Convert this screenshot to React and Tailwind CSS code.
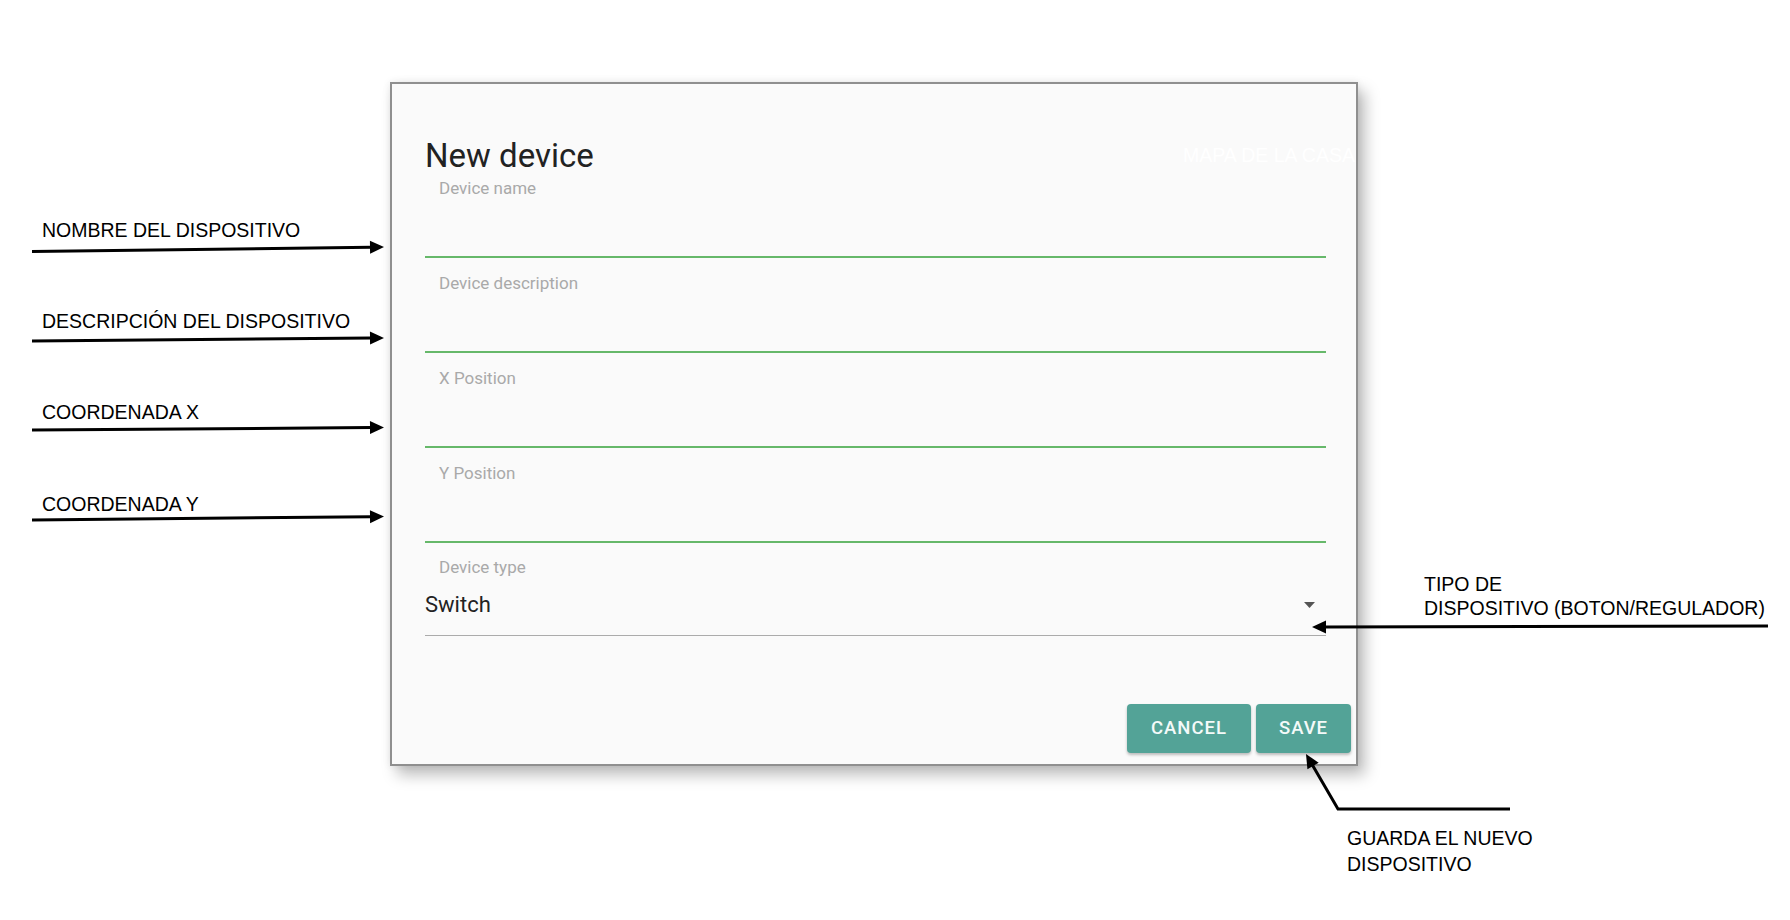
import React from 'react';

const fields = ['Device name', 'Device description', 'X Position', 'Y Position'];

// annotation arrows, page coordinates
const arrows = [
  { pts: [[32, 251.5], [384, 247]] },
  { pts: [[32, 341], [384, 338]] },
  { pts: [[32, 430], [384, 427.5]] },
  { pts: [[32, 520], [384, 516.5]] },
  { pts: [[1768, 626], [1312, 627]] },
  { pts: [[1510, 809], [1338, 809], [1306, 754]] },
];

const Arrow = ({ pts }) => {
  const [tx, ty] = pts[pts.length - 1];
  const [px, py] = pts[pts.length - 2];
  const len = Math.hypot(tx - px, ty - py);
  const ux = (tx - px) / len;
  const uy = (ty - py) / len;
  const bx = tx - ux * 14;
  const by = ty - uy * 14;
  const nx = -uy * 6.5;
  const ny = ux * 6.5;
  const line = [...pts.slice(0, -1), [bx + ux, by + uy]].map((p) => p.join(',')).join(' ');
  return (
    <g>
      <polyline points={line} fill="none" stroke="#000" strokeWidth="3" strokeLinejoin="miter" />
      <polygon points={`${tx},${ty} ${bx + nx},${by + ny} ${bx - nx},${by - ny}`} fill="#000" />
    </g>
  );
};

const Field = ({ label, first }) => (
  <div className={first ? 'mt-[2px]' : 'mt-[15px]'}>
    <div className="pl-[14px] text-[17px] leading-[20px] text-[#a9a9a9]">{label}</div>
    <div className="h-[60px] border-b-[2.5px] border-[#66b86a]" />
  </div>
);

const Note = ({ className, children }) => (
  <div
    className={`absolute whitespace-nowrap font-['Liberation_Sans',Arial,sans-serif] text-[19.5px] leading-[22px] text-black ${className}`}
  >
    {children}
  </div>
);

export default function App() {
  return (
    <div className="relative h-[920px] w-[1790px] overflow-hidden bg-white pl-[390px] pt-[82px]">
      <div className="flex h-[684px] w-[968px] flex-col border-2 border-[#8f8f8f] bg-[#fafafa] font-['Roboto',sans-serif] shadow-[0_0_8px_rgba(0,0,0,0.08),7px_9px_14px_rgba(0,0,0,0.26)]">
        <div className="pl-[33px] pr-[30px] pt-[52px]">
          <h2 className="text-[33px] leading-[40px] text-[#222]">New device</h2>
          {fields.map((f, i) => (
            <Field key={f} label={f} first={i === 0} />
          ))}
          <div className="mt-[14px]">
            <div className="pl-[14px] text-[17px] leading-[20px] text-[#a9a9a9]">Device type</div>
            <div className="mt-[15px] flex items-center justify-between border-b border-[#ababab] pb-[17px]">
              <span className="text-[22px] leading-[26px] text-[#222]">Switch</span>
              <svg width="11" height="6" viewBox="0 0 11 6" className="mr-[11px]">
                <polygon points="0,0 11,0 5.5,6" fill="#555" />
              </svg>
            </div>
          </div>
        </div>
        <div className="mt-auto flex justify-end gap-[5px] pb-[11px] pr-[5px]">
          <button className="h-[49px] w-[124px] rounded-[4px] bg-[#53a397] text-[18.5px] font-medium tracking-[1px] text-[#f4faf9] shadow-[0_2px_3px_rgba(0,0,0,0.25)]">
            CANCEL
          </button>
          <button className="h-[49px] w-[95px] rounded-[4px] bg-[#53a397] text-[18.5px] font-medium tracking-[1px] text-[#f4faf9] shadow-[0_2px_3px_rgba(0,0,0,0.25)]">
            SAVE
          </button>
        </div>
      </div>

      <Note className="left-[1183px] top-[144px] text-white">MAPA DE LA CASA</Note>

      <Note className="left-[42px] top-[219px]">NOMBRE DEL DISPOSITIVO</Note>
      <Note className="left-[42px] top-[310px]">DESCRIPCIÓN DEL DISPOSITIVO</Note>
      <Note className="left-[42px] top-[401px]">COORDENADA X</Note>
      <Note className="left-[42px] top-[493px]">COORDENADA Y</Note>
      <Note className="left-[1424px] top-[572px] leading-[24px]">
        TIPO DE
        <br />
        DISPOSITIVO (BOTON/REGULADOR)
      </Note>
      <Note className="left-[1347px] top-[825px] leading-[26px]">
        GUARDA EL NUEVO
        <br />
        DISPOSITIVO
      </Note>

      <svg className="pointer-events-none absolute left-0 top-0" width="1790" height="920" viewBox="0 0 1790 920">
        {arrows.map((a, i) => (
          <Arrow key={i} pts={a.pts} />
        ))}
      </svg>
    </div>
  );
}
